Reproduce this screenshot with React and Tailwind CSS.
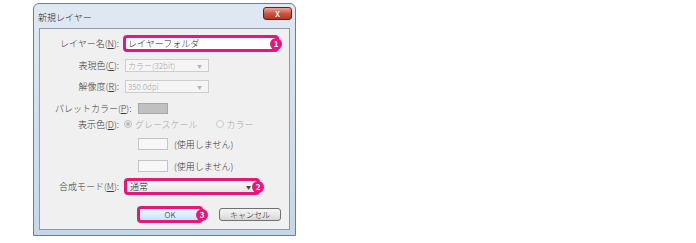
import React from 'react';

const font = { fontFamily: '"Noto Sans CJK JP", "Noto Sans", sans-serif' };

function Badge({ n, className }) {
  return (
    <span className={`absolute top-1/2 -translate-y-1/2 w-[12px] h-[12px] rounded-full bg-[#e8157c] text-white text-[8px] font-bold leading-none flex items-center justify-center ${className}`}>
      {n}
    </span>
  );
}

function Label({ text, k }) {
  return (
    <div className="w-[79px] shrink-0 text-right text-[9px] font-light leading-none text-[#3a3a3a] whitespace-nowrap">
      {text}(<span className="underline">{k}</span>):
    </div>
  );
}

function Arrow({ light }) {
  return <span className={`text-[5px] leading-none ${light ? 'text-[#b4b4b4]' : 'text-[#444]'}`}>▼</span>;
}

export default function App() {
  return (
    <div className="w-[696px] h-[243px] bg-white pt-[3px] pl-[33px]" style={font}>
      <div className="w-[263px] h-[233px] border border-[#6f7e8c] rounded-t-[6px] bg-gradient-to-b from-[#dfe9f3] to-[#c4d7e9] flex flex-col">
        {/* title bar */}
        <div className="h-[24px] flex items-start justify-between pl-[4px] pr-[3px]">
          <span className="text-[9px] font-light leading-none text-[#1e1e1e] mt-[9px]">新規レイヤー</span>
          <div className="mt-[3px] w-[29px] h-[13px] rounded-[3px] border border-[#6b2018] bg-gradient-to-b from-[#e9a597] via-[#cf5444] to-[#b8321f] flex items-center justify-center">
            <span className="text-white text-[8px] font-bold leading-none" style={{ textShadow: '0 0 1px #5a1008' }}>X</span>
          </div>
        </div>

        {/* client area */}
        <div className="mx-[5px] h-[202px] border border-[#8c9aa8] bg-[#f0f0f0] flex flex-col">
          {/* name */}
          <div className="mt-[6px] h-[17px] flex items-center">
            <Label text="レイヤー名" k="N" />
            <div className="relative ml-[4px] w-[156px] h-[17px] border-[3px] border-[#e8157c] rounded-[4px] bg-white flex items-center pl-[2px]">
              <span className="text-[9px] font-light leading-none text-[#222]">レイヤーフォルダ</span>
              <Badge n="1" className="right-[-6px]" />
            </div>
          </div>

          {/* color */}
          <div className="mt-[7px] h-[13px] flex items-center">
            <Label text="表現色" k="C" />
            <div className="ml-[6px] w-[84px] h-[13px] border border-[#cdcdcd] bg-[#f5f5f5] flex items-center justify-between pl-[2px] pr-[6px]">
              <span className="text-[8px] font-light leading-none text-[#a6a6a6]">カラー(32bit)</span>
              <Arrow light />
            </div>
          </div>

          {/* resolution */}
          <div className="mt-[8px] h-[13px] flex items-center">
            <Label text="解像度" k="R" />
            <div className="ml-[6px] w-[84px] h-[13px] border border-[#cdcdcd] bg-[#f5f5f5] flex items-center justify-between pl-[2px] pr-[6px]">
              <span className="text-[8px] font-light leading-none text-[#a6a6a6]">350.0dpi</span>
              <Arrow light />
            </div>
          </div>

          {/* palette */}
          <div className="mt-[10px] h-[11px] flex items-center">
            <div className="w-[98px] shrink-0 pl-[15px] text-[9px] font-light leading-none text-[#3a3a3a] whitespace-nowrap">
              パレットカラー(<span className="underline">P</span>):
            </div>
            <div className="w-[30px] h-[11px] border border-[#a8a8a8] bg-[#c0c0c0]" />
          </div>

          {/* display color */}
          <div className="mt-[4px] h-[12px] flex items-center">
            <Label text="表示色" k="D" />
            <div className="ml-[5px] flex items-center">
              <span className="w-[8px] h-[8px] rounded-full border border-[#bcbcbc] bg-[#f4f4f4] flex items-center justify-center">
                <span className="w-[4px] h-[4px] rounded-full bg-[#b8b8b8]" />
              </span>
              <span className="ml-[3px] text-[9px] font-light leading-none text-[#a6a6a6]">グレースケール</span>
              <span className="ml-[18px] w-[8px] h-[8px] rounded-full border border-[#c8c8c8] bg-[#f4f4f4]" />
              <span className="ml-[3px] text-[9px] font-light leading-none text-[#a6a6a6]">カラー</span>
            </div>
          </div>

          {/* unused 1 */}
          <div className="mt-[8px] h-[12px] flex items-center">
            <div className="w-[98px] shrink-0" />
            <div className="w-[30px] h-[12px] border border-[#c4c4c4] bg-[#f7f7f7]" />
            <span className="ml-[6px] text-[9px] font-light leading-none text-[#333]">(使用しません)</span>
          </div>

          {/* unused 2 */}
          <div className="mt-[10px] h-[12px] flex items-center">
            <div className="w-[98px] shrink-0" />
            <div className="w-[30px] h-[12px] border border-[#c4c4c4] bg-[#f7f7f7]" />
            <span className="ml-[6px] text-[9px] font-light leading-none text-[#333]">(使用しません)</span>
          </div>

          {/* blend mode */}
          <div className="mt-[6px] h-[17px] flex items-center">
            <Label text="合成モード" k="M" />
            <div className="relative ml-[5px] w-[136px] h-[17px] border-[3px] border-[#e8157c] rounded-[4px] bg-gradient-to-b from-[#fbfbfb] to-[#e6e6e6] flex items-center justify-between pl-[3px] pr-[6px]">
              <span className="text-[9px] font-light leading-none text-[#222]">通常</span>
              <Arrow />
              <Badge n="2" className="right-[-7px]" />
            </div>
          </div>

          {/* buttons */}
          <div className="mt-[11px] h-[17px] flex items-center">
            <div className="w-[97px] shrink-0" />
            <div className="relative w-[66px] h-[17px] border-[3px] border-[#e8157c] rounded-[4px] bg-gradient-to-b from-[#eaf6fd] via-[#d9f0fc] to-[#bee6fd] flex items-center justify-center">
              <span className="text-[8px] font-light leading-none text-[#222]">OK</span>
              <Badge n="3" className="right-[-8px]" />
            </div>
            <div className="ml-[16px] w-[62px] h-[13px] border border-[#707070] rounded-[3px] bg-gradient-to-b from-[#f4f4f4] via-[#e8e8e8] to-[#d6d6d6] flex items-center justify-center">
              <span className="text-[8px] font-light leading-none text-[#222]">キャンセル</span>
            </div>
          </div>
        </div>
      </div>
    </div>
  );
}
